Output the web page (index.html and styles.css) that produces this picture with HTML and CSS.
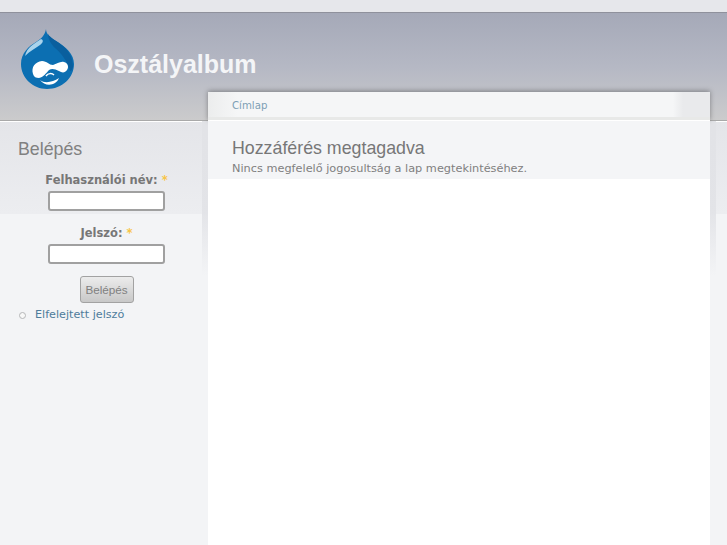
FILE: index.html
```html
<!DOCTYPE html>
<html lang="hu">
<head>
    <meta charset="UTF-8">
    <title>Osztályalbum</title>
    <link rel="stylesheet" href="styles.css">
</head>
<body>
    <div class="topStrip"></div>
    <header class="header">
        <svg class="logo" width="53" height="60" viewBox="0 0 53 60">
            <path d="M25 0C25 5 29 8 35 12C45 18 53 25 53 35C53 49 41 60 26 60C12 60 0 49 0 35C0 24 8 17 15 13C20 10 24 6 25 0Z" fill="#0c6fb2"/>
            <path d="M27 5C29 9 36 12 42 17C49 23 52 30 52 38C51 41 50 42 49 42C47 33 41 25 34 19C30 15 27 10 27 5Z" fill="#0a5f9e"/>
            <path d="M20 10C13 15 6 18 4 27C9 22 15 19 19 16C22 14 23 11 20 10Z" fill="#a9d3ec"/>
            <path d="M12 45C10 38 14 33 21 32C26 32 28 36 32 36C36 35 39 32 43 33C47 34 48 38 46 41C44 44 41 44 38 42C34 40 31 39 28 41C25 44 23 48 18 49C15 49 13 48 12 45Z" fill="#fff"/>
            <path d="M19 51C24 55 32 53 38 49C35 57 24 58 19 51Z" fill="#fff"/>
            <path d="M25 47C27 44 31 44 33 46" fill="none" stroke="#fff" stroke-width="1.5"/>
        </svg>
        <h1 class="siteName">Osztályalbum</h1>
    </header>
    <div class="columns">
        <aside class="sidebar">
            <h2 class="blockTitle">Belépés</h2>
            <form class="loginForm">
                <label class="fieldLabel" for="user">Felhasználói név: <span class="req">*</span></label>
                <input class="inputBox" id="user" type="text">
                <label class="fieldLabel second" for="pass">Jelszó: <span class="req">*</span></label>
                <input class="inputBox" id="pass" type="password">
                <button class="loginBtn" type="button">Belépés</button>
            </form>
            <ul class="links">
                <li><a href="#">Elfelejtett jelszó</a></li>
            </ul>
        </aside>
        <main class="panel">
            <div class="crumbs"><a href="#">Címlap</a></div>
            <div class="pageHead">
                <h2 class="pageTitle">Hozzáférés megtagadva</h2>
                <p class="message">Nincs megfelelő jogosultság a lap megtekintéséhez.</p>
            </div>
        </main>
    </div>
</body>
</html>
```

FILE: styles.css
```css
html, body {
    height: 100%;
}

body {
    margin: 0;
    height: 545px;
    overflow: hidden;
    font-family: "DejaVu Sans", sans-serif;
    font-size: 11.3px;
    color: #777;
    background: linear-gradient(#e4e5e9 121px, #eceDf0 214px, #f3f4f6 214px);
    display: flex;
    flex-direction: column;
}

.topStrip {
    height: 12px;
    background: #e6e7eb;
}

.header {
    box-sizing: border-box;
    height: 109px;
    display: flex;
    align-items: flex-start;
    padding: 16px 0 0 21px;
    background: linear-gradient(#a5a9b8, #b5b8c4 50%, #cbcbcc);
    border-top: 1px solid #8f919c;
    border-bottom: 1px solid #a9a9a9;
    box-shadow: 0 1px 0 #fff;
}

.logo {
    flex: none;
}

.siteName {
    margin: 19px 0 0 20px;
    font-family: "Liberation Sans", sans-serif;
    font-size: 25px;
    line-height: 32px;
    color: #f4f5f7;
}

.columns {
    flex: 1;
    display: flex;
    margin-top: -29px;
}

.sidebar {
    box-sizing: border-box;
    width: 208px;
    padding-top: 45px;
}

.blockTitle {
    margin: 0 0 0 18px;
    font-family: "Liberation Sans", sans-serif;
    font-size: 17.8px;
    font-weight: normal;
    line-height: 24px;
    color: #808080;
}

.loginForm {
    display: flex;
    flex-direction: column;
    align-items: center;
    margin-top: 12px;
    padding-left: 7px;
    padding-right: 2px;
}

.fieldLabel {
    font-size: 11.5px;
    font-weight: bold;
    line-height: 15px;
    color: #777;
    margin-bottom: 3px;
}

.fieldLabel.second {
    margin-top: 15px;
}

.req {
    color: #f8c547;
}

.inputBox {
    box-sizing: border-box;
    width: 117px;
    height: 20px;
    padding: 0;
    background: #fff;
    border: 2px solid #a0a0a0;
    border-radius: 3px;
}

.loginBtn {
    box-sizing: border-box;
    width: 54px;
    height: 27px;
    margin-top: 12px;
    padding: 0;
    font-family: "Liberation Sans", sans-serif;
    font-size: 11.7px;
    color: #808080;
    background: linear-gradient(#ececec, #c8c8c8);
    border: 1px solid #a2a2a2;
    border-radius: 3px;
}

.links {
    margin: 4px 0 0;
    padding: 0;
    list-style: none;
    line-height: 16px;
}

.links li {
    display: flex;
    align-items: center;
    gap: 9px;
    padding-left: 19px;
}

.links li::before {
    content: "";
    box-sizing: border-box;
    width: 7px;
    height: 7px;
    border: 1px solid #b5b6b8;
    border-radius: 50%;
    background: #f8f8f8;
}

.links a {
    color: #4e7c9b;
    font-size: 11.2px;
    text-decoration: none;
}

.panel {
    position: relative;
    width: 502px;
    background: #fff;
}

/* soft fading edges either side of the panel */
.panel::before,
.panel::after {
    content: "";
    position: absolute;
    top: 29px;
    width: 6px;
    height: 155px;
    background: linear-gradient(#e2e3e7, rgba(226, 227, 231, 0.9) 60%, rgba(226, 227, 231, 0));
}

.panel::before {
    left: -6px;
}

.panel::after {
    right: -6px;
}

.crumbs {
    position: relative;
    z-index: 1;
    box-sizing: border-box;
    height: 29px;
    padding: 6px 0 0 24px;
    font-size: 10.2px;
    line-height: 15px;
    background:
        linear-gradient(transparent 25px, #e8e9e8 25px),
        linear-gradient(90deg, #eceded, #f5f6f7 30px, #f5f6f7 465px, #e9eaec 475px);
    border-bottom: 1px solid #fff;
    box-shadow: 0 -1px 5px rgba(0, 0, 0, 0.35);
}

.crumbs a {
    color: #7d9fb5;
    text-decoration: none;
}

.pageHead {
    position: relative;
    z-index: 1;
    box-sizing: border-box;
    height: 58px;
    padding: 15px 24px 0;
    background: #f4f5f7;
}

.pageTitle {
    margin: 0 0 1px;
    font-family: "Liberation Sans", sans-serif;
    font-size: 17.8px;
    font-weight: normal;
    line-height: 24px;
    color: #777;
}

.message {
    margin: 0;
    line-height: 16px;
    color: #808080;
}
```
